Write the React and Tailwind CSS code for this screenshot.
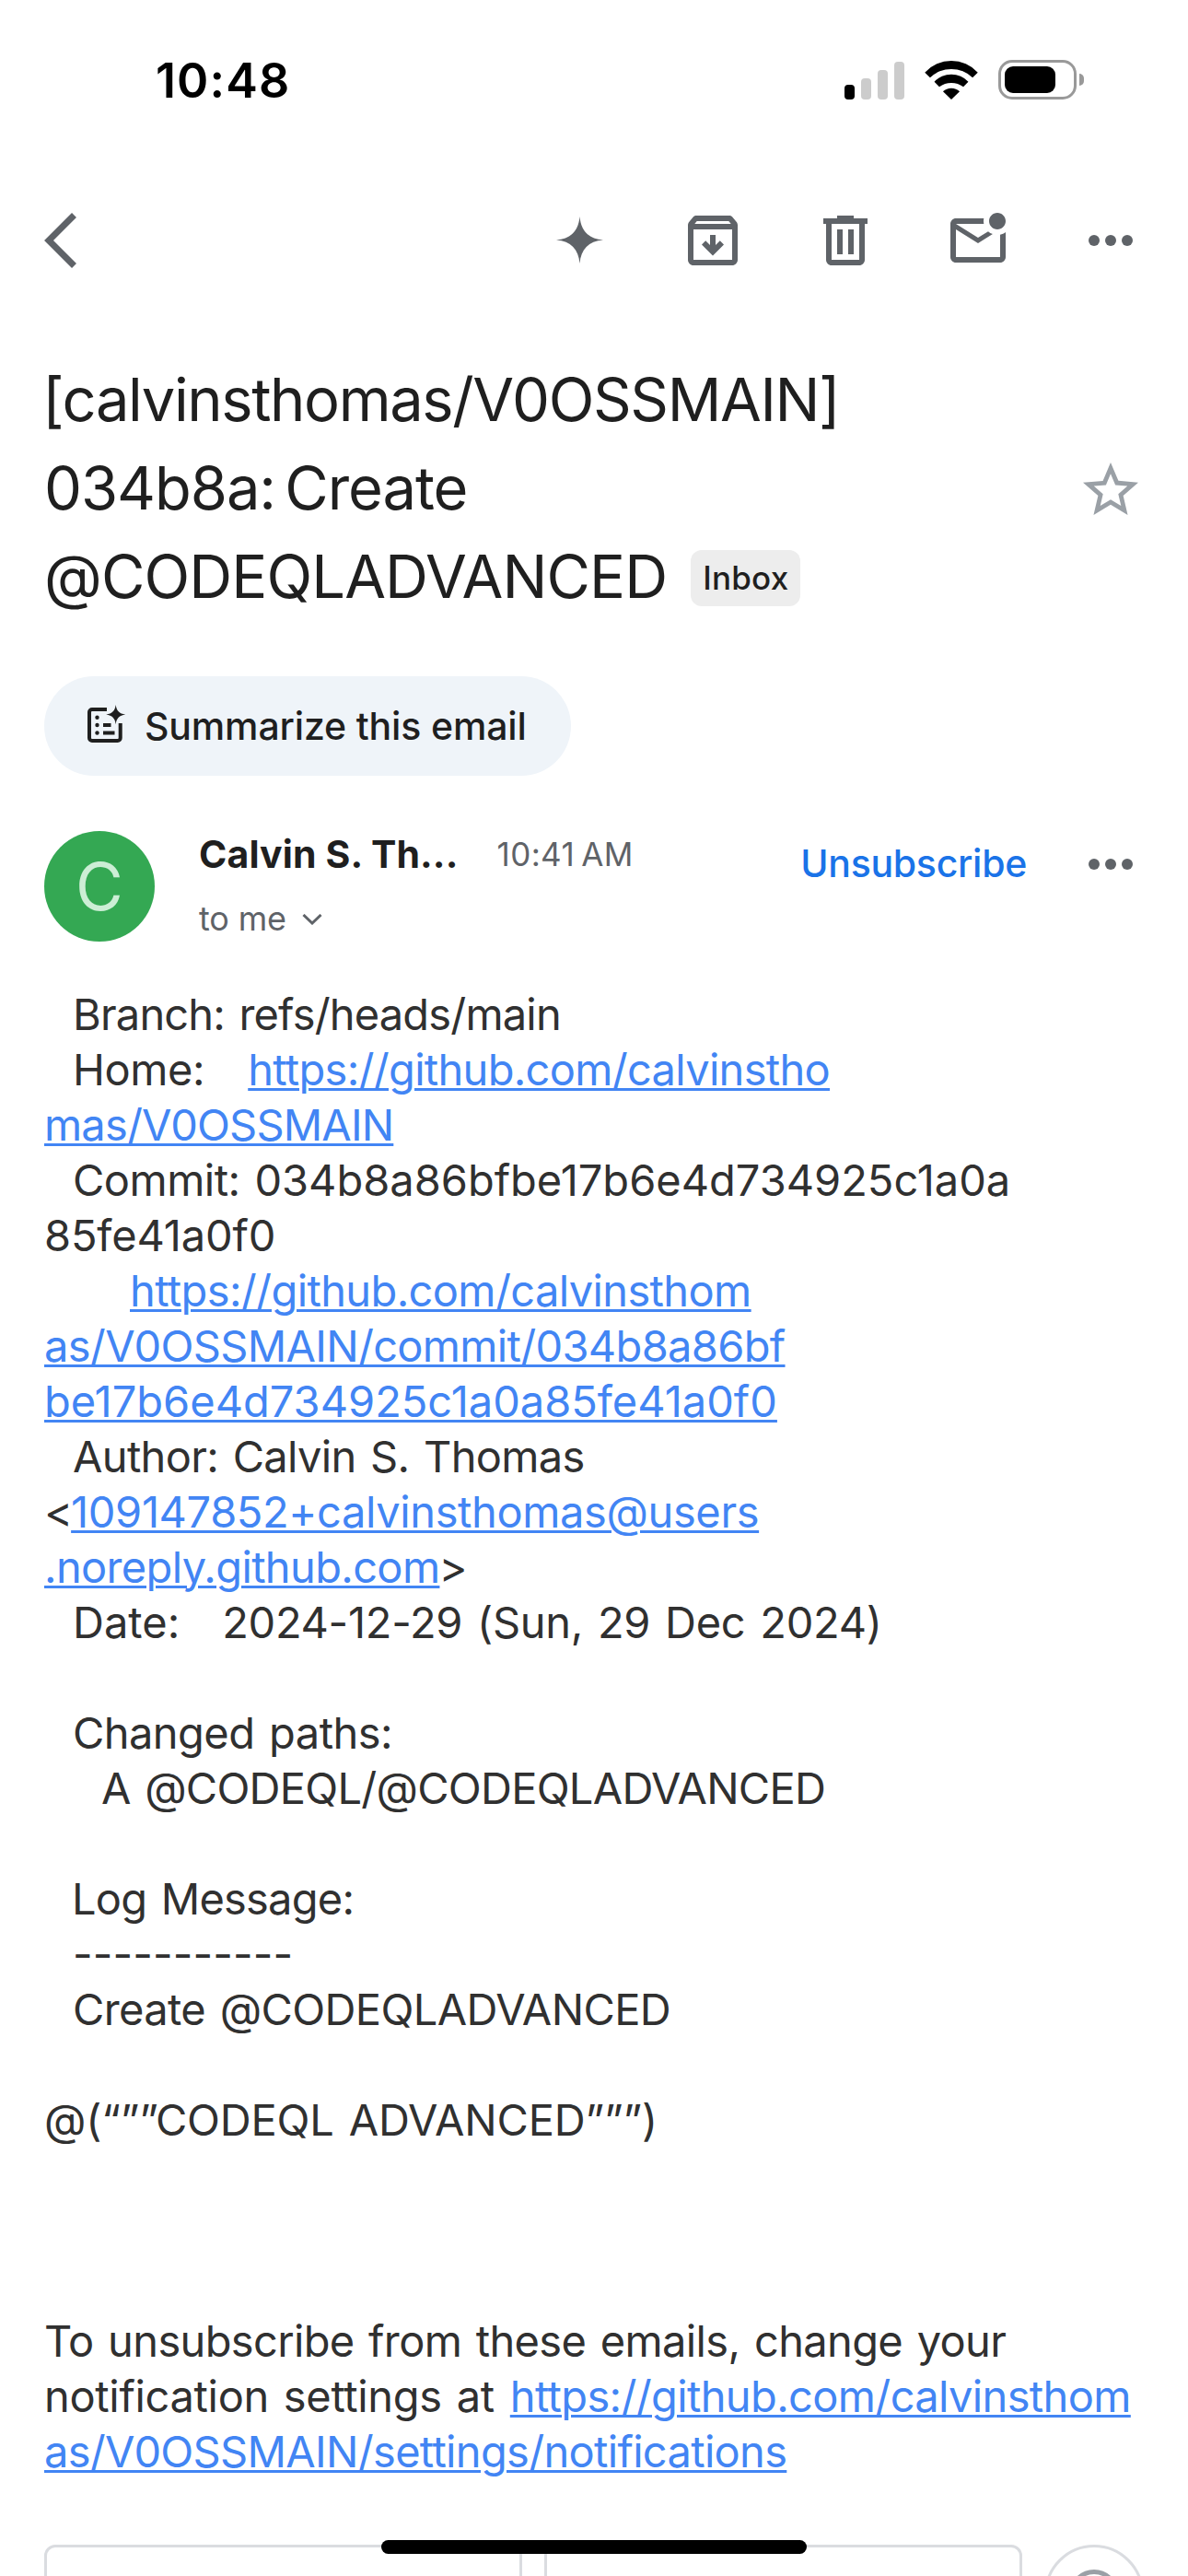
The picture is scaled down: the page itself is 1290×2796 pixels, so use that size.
const DotsIcon = () => (
  <svg className="size-[72px] fill-[#5f6368]" viewBox="0 0 24 24">
    <circle cx="6" cy="12" r="2" />
    <circle cx="12" cy="12" r="2" />
    <circle cx="18" cy="12" r="2" />
  </svg>
);

function StatusBar() {
  return (
    <div className="flex h-[162px] items-center justify-between pl-[169px] pr-[113px] pt-[12px]">
      <span className="mt-[2px] text-[52px] font-semibold leading-none tracking-[1.1px] text-black">10:48</span>
      <div className="mb-[1px] flex items-center">
        <div className="flex h-[42px] items-end gap-[7px]">
          <span className="h-[16px] w-[11px] rounded-[4px] bg-black" />
          <span className="h-[23px] w-[11px] rounded-[4px] bg-[#cccccc]" />
          <span className="h-[32px] w-[11px] rounded-[4px] bg-[#cccccc]" />
          <span className="h-[41px] w-[11px] rounded-[4px] bg-[#cccccc]" />
        </div>
        <svg className="ml-[22px] h-[42px] w-[58px]" viewBox="0 0 57.5 42">
          <path d="M0 12.7A39 39 0 0 1 57.5 12.7L51.8 18.3A33 33 0 0 0 5.7 18.3Z" />
          <path d="M10.3 22.7A25.2 25.2 0 0 1 47.2 22.7L41.8 28.3A21.8 21.8 0 0 0 15.7 28.3Z" />
          <path d="M19.7 33.3A13 13 0 0 1 37.8 33.3L28.75 42Z" />
        </svg>
        <div className="ml-[22px] flex h-[43px] w-[85px] rounded-[15px] border-[3px] border-[#999999] p-[4px]">
          <span className="h-[29px] w-[55px] rounded-[9px] bg-black" />
        </div>
        <span className="ml-[3px] h-[13px] w-[5px] rounded-r-full bg-[#999999]" />
      </div>
    </div>
  );
}

function Toolbar() {
  return (
    <header className="flex h-[198px] items-center justify-between pl-[48px] pr-[48px]">
      <svg className="h-[60px] w-[36px]" viewBox="0 0 36 60" fill="none" stroke="#5f6368" strokeWidth="7">
        <path d="M32.5 2.5L5 30L32.5 57.5" />
      </svg>
      <nav className="flex gap-[72px]">
        <svg className="size-[72px] fill-[#5f6368]" viewBox="0 0 72 72">
          <path d="M35.5 10C36.8 25.5 45 34.3 61 35.5C45 36.7 36.8 45.5 35.5 61C34.2 45.5 26 36.7 10 35.5C26 34.3 34.2 25.5 35.5 10Z" />
        </svg>
        <svg className="size-[72px] fill-[#5f6368]" viewBox="0 0 24 24">
          <path d="M20.54 5.23l-1.39-1.68C18.88 3.21 18.47 3 18 3H6c-.47 0-.88.21-1.16.55L3.46 5.23C3.17 5.57 3 6.02 3 6.5V19c0 1.1.9 2 2 2h14c1.1 0 2-.9 2-2V6.5c0-.48-.17-.93-.46-1.27zM6.24 5h11.52l.83 1H5.42l.82-1zM5 19V8h14v11H5z" />
          <path d="M12 17.5l4-4-1.4-1.4-1.6 1.6V10h-2v3.7l-1.6-1.6L8 13.5z" />
        </svg>
        <svg className="size-[72px] fill-[#5f6368]" viewBox="0 0 24 24">
          <path fillRule="evenodd" d="M9 3h6v1h5v2h-1v13c0 1.1-.9 2-2 2H7c-1.1 0-2-.9-2-2V6H4V4h5zM7 6v13h10V6zM9 8h2v9H9zM13 8h2v9h-2z" />
        </svg>
        <svg className="size-[72px] fill-[#5f6368]" viewBox="0 0 24 24">
          <path d="M22 8.98V18c0 1.1-.9 2-2 2H4c-1.1 0-2-.9-2-2V6c0-1.1.9-2 2-2h10.1c-.06.32-.1.66-.1 1 0 .34.04.68.1 1H4l8 5 3.67-2.29c.47.43 1.02.76 1.63.98L12 13 4 8v10h16V9.9c.74-.15 1.42-.48 2-.92zM16 5c0 1.66 1.34 3 3 3s3-1.34 3-3-1.34-3-3-3-3 1.34-3 3z" />
        </svg>
        <DotsIcon />
      </nav>
    </header>
  );
}

function Subject() {
  return (
    <section className="mt-[26px] flex items-center justify-between pl-[46px] pr-[48px]">
      <h1 className="text-[65px] leading-[96px] text-[#1f1f1f]">
        <span className="block tracking-[-1.39px]">[calvinsthomas/V0OSSMAIN]</span>
        <span className="block pl-[2px] tracking-[-1.05px] [word-spacing:-7px]">034b8a: Create</span>
        <span className="flex items-center pl-[2px]">
          <span className="tracking-[-0.89px]">@CODEQLADVANCED</span>
          <span className="ml-[26px] mt-[2px] flex h-[61px] w-[119px] items-center justify-center rounded-[12px] bg-[#ededed] text-[35px] font-medium tracking-[0.2px]">
            Inbox
          </span>
        </span>
      </h1>
      <svg className="mt-[4px] size-[72px] fill-[#9aa0a6]" viewBox="0 0 24 24">
        <path d="M22 9.24l-7.19-.62L12 2 9.19 8.63 2 9.24l5.46 4.73L5.82 21 12 17.27 18.18 21l-1.63-7.03L22 9.24zM12 15.4l-3.76 2.27 1-4.28-3.32-2.88 4.38-.38L12 6.1l1.71 4.04 4.38.38-3.32 2.88 1 4.28L12 15.4z" />
      </svg>
    </section>
  );
}

function SummarizeButton() {
  return (
    <button className="ml-[48px] mt-[60px] flex h-[108px] w-[572px] items-center rounded-full bg-[#eff4f9] pl-[44px] text-[#1f1f1f]">
      <svg className="size-[48px] shrink-0" viewBox="92 764 48 48" fill="#1f1f1f">
        <path
          d="M116 770H100a3 3 0 0 0 -3 3V801a3 3 0 0 0 3 3H127.7a3 3 0 0 0 3 -3V785"
          fill="none"
          stroke="#1f1f1f"
          strokeWidth="4"
        />
        <path d="M125.7 765C126.5 771.5 129.5 774.6 136.2 775.6C129.5 776.6 126.5 779.7 125.7 786.2C124.9 779.7 121.9 776.6 115.2 775.6C121.9 774.6 124.9 771.5 125.7 765Z" />
        <circle cx="105.5" cy="778.7" r="2.2" />
        <circle cx="105.5" cy="787" r="2.2" />
        <circle cx="105.5" cy="795.5" r="2.2" />
        <path d="M112 785h8.5v4h-8.5zM112 793.5h12.5v4h-12.5z" />
      </svg>
      <span className="ml-[17px] mt-[1px] whitespace-nowrap text-[41px] font-medium tracking-[-0.15px]">Summarize this email</span>
    </button>
  );
}

function SenderRow() {
  return (
    <section className="mt-[60px] flex h-[120px] pl-[48px] pr-[48px]">
      <div className="flex size-[120px] items-center justify-center rounded-full bg-[#34a853] text-[71px] text-[#cceed5]">
        C
      </div>
      <div className="ml-[48px] flex-1">
        <div className="flex h-[52px] items-center whitespace-nowrap">
          <span className="text-[41px] font-bold tracking-[0.13px] text-[#1f1f1f]">Calvin S. Th...</span>
          <span className="ml-[42px] mt-[-1px] text-[35px] tracking-[0.4px] text-[#5f6368] [word-spacing:-3px]">10:41 AM</span>
        </div>
        <div className="mt-[17px] flex h-[52px] items-center text-[36px] tracking-[-0.17px] text-[#5f6368]">
          to me
          <svg className="ml-[17px] mt-[2px] h-[12px] w-[22px]" viewBox="0 0 22 12" fill="none" stroke="#5f6368" strokeWidth="3">
            <path d="M1.5 1L11 10L20.5 1" />
          </svg>
        </div>
      </div>
      <div className="flex h-[72px] items-center gap-[55px]">
        <a className="text-[41px] font-medium tracking-[-0.29px] text-[#1a73e8]">Unsubscribe</a>
        <DotsIcon />
      </div>
    </section>
  );
}

const Line = ({ className = "", children }) => (
  <div className={`flex h-[60px] whitespace-pre [word-spacing:3px] ${className}`}>{children}</div>
);

const Link = ({ className = "", children }) => (
  <a className={`text-[#4285f4] underline decoration-[3px] underline-offset-[3px] ${className}`}>{children}</a>
);

function MessageBody() {
  return (
    <article className="mt-[49px] pl-[48px] text-[47px] leading-[60px] text-[#303030]">
      <Line className="pl-[31px] tracking-[-0.82px]">Branch: refs/heads/main</Line>
      <Line className="pl-[31px]">
        <span className="tracking-[-0.4px]">Home:</span>
        <Link className="ml-[47px] tracking-[-0.7px]">https://github.com/calvinstho</Link>
      </Line>
      <Line>
        <Link className="tracking-[-0.83px]">mas/V0OSSMAIN</Link>
      </Line>
      <Line className="pl-[31px]">
        <span className="tracking-[-0.5px]">Commit: </span>034b8a86bfbe17b6e4d734925c1a0a
      </Line>
      <Line className="tracking-[-0.15px]">85fe41a0f0</Line>
      <Line className="pl-[93px]">
        <Link className="tracking-[-0.62px]">https://github.com/calvinsthom</Link>
      </Line>
      <Line>
        <Link className="tracking-[-0.67px]">as/V0OSSMAIN/commit/034b8a86bf</Link>
      </Line>
      <Line>
        <Link>be17b6e4d734925c1a0a85fe41a0f0</Link>
      </Line>
      <Line className="pl-[31px] tracking-[-0.67px]">Author: Calvin S. Thomas</Line>
      <Line>
        &lt;<Link className="ml-[-2px] tracking-[-0.38px]">109147852+calvinsthomas@users</Link>
      </Line>
      <Line>
        <Link className="tracking-[-0.65px]">.noreply.github.com</Link>
        <span className="ml-[-1px]">&gt;</span>
      </Line>
      <Line className="pl-[31px]">
        Date:<span className="ml-[46px] tracking-[-0.29px]">2024-12-29 (Sun, 29 Dec 2024)</span>
      </Line>
      <Line />
      <Line className="pl-[31px] tracking-[-0.55px]">Changed paths:</Line>
      <Line className="pl-[62px] tracking-[-0.74px]">A @CODEQL/@CODEQLADVANCED</Line>
      <Line />
      <Line className="pl-[30px] tracking-[-0.77px]">Log Message:</Line>
      <Line className="pl-[31px] tracking-[0.14px]">-----------</Line>
      <Line className="pl-[31px] tracking-[-0.62px]">Create @CODEQLADVANCED</Line>
      <Line />
      <Line className="tracking-[-0.2px]">@(“””CODEQL ADVANCED”””)</Line>
      <Line />
      <Line />
      <Line />
      <Line className="tracking-[-0.65px]">To unsubscribe from these emails, change your</Line>
      <Line>
        <span className="tracking-[-0.33px]">notification settings at</span>
        <Link className="ml-[17px] tracking-[-0.64px]">https://github.com/calvinsthom</Link>
      </Line>
      <Line>
        <Link className="tracking-[-0.68px]">as/V0OSSMAIN/settings/notifications</Link>
      </Line>
    </article>
  );
}

function BottomActions() {
  return (
    <footer className="relative mt-[71px] flex h-[34px] overflow-hidden pl-[48px]">
      <div className="h-[108px] w-[519px] shrink-0 rounded-[12px] border-[3px] border-[#dadce0]" />
      <div className="ml-[24px] h-[108px] w-[519px] shrink-0 rounded-[12px] border-[3px] border-[#dadce0]" />
      <div className="ml-[24px] flex size-[108px] shrink-0 items-center justify-center rounded-full border-[3px] border-[#dadce0]">
        <span className="size-[54px] rounded-full border-[5px] border-[#9aa0a6]" />
      </div>
    </footer>
  );
}

export default function App() {
  return (
    <div className="relative flex h-[2796px] w-[1290px] flex-col overflow-hidden bg-white font-['Inter',sans-serif]">
      <StatusBar />
      <Toolbar />
      <Subject />
      <SummarizeButton />
      <SenderRow />
      <MessageBody />
      <BottomActions />
      <div className="absolute bottom-[24px] left-1/2 h-[15px] w-[462px] -translate-x-1/2 rounded-full bg-black" />
    </div>
  );
}
